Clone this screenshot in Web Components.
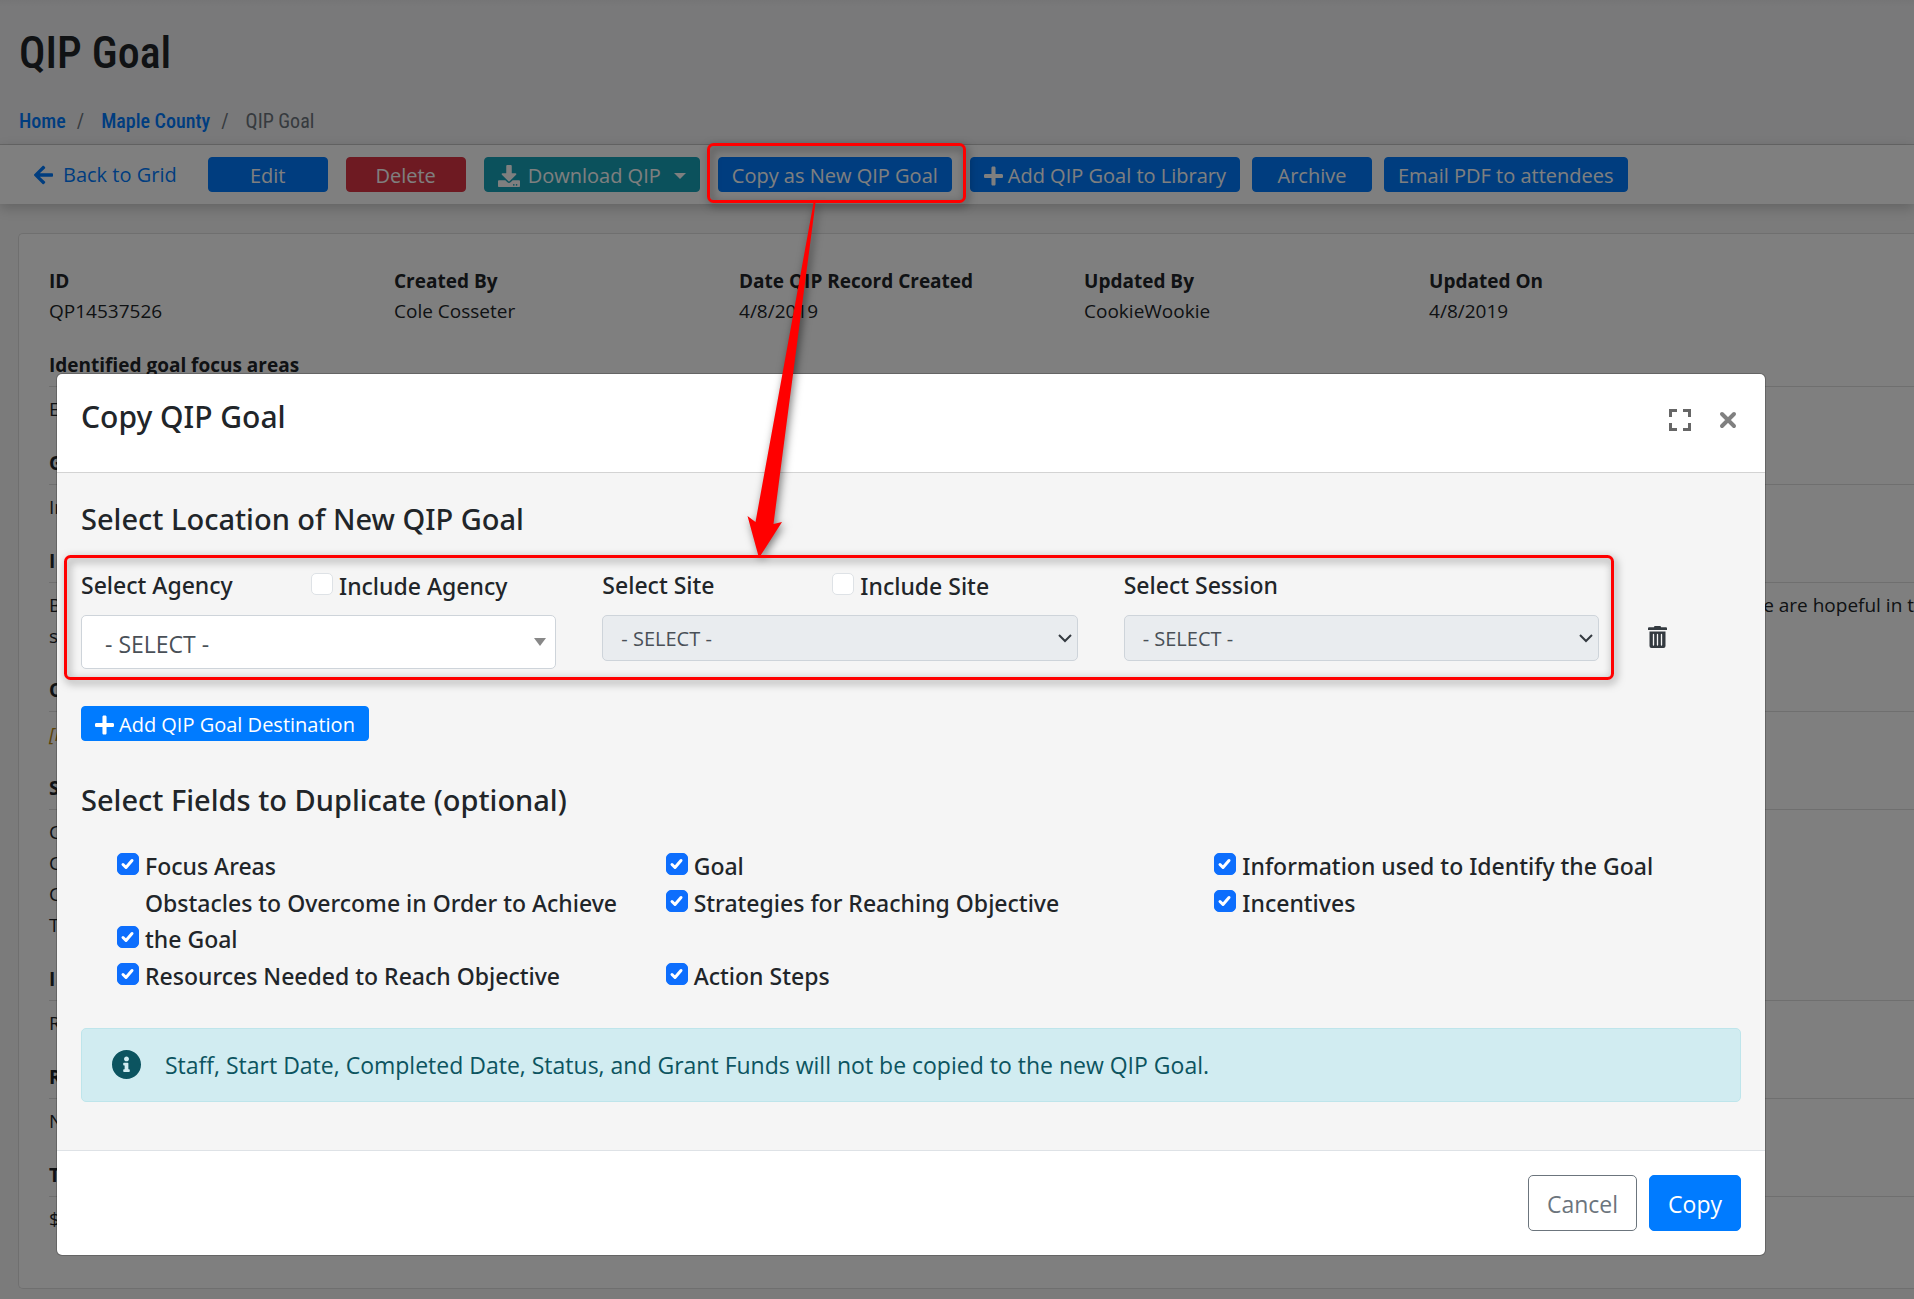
<!DOCTYPE html>
<html lang="en">
<head>
<meta charset="utf-8">
<title>QIP Goal</title>
<style>
  body {
    --medium-font: "Noto Sans", "Open Sans", sans-serif;
    margin: 0;
    height: 100vh;
    overflow: hidden;
    position: relative;
    background: #f6f6f6;
    color: #212529;
    font-family: "Open Sans", "Noto Sans", sans-serif;
    font-size: 19px;
    line-height: 30px;
  }
</style>
</head>
<body>

<page-header heading="QIP Goal">
  <a href="#home">Home</a>
  <a href="#county">Maple County</a>
  <span>QIP Goal</span>
</page-header>

<tool-bar>
  <back-link href="#grid">Back to Grid</back-link>
  <qip-button>Edit</qip-button>
  <qip-button variant="danger">Delete</qip-button>
  <qip-button variant="info" icon="download" caret>Download QIP</qip-button>
  <qip-button>Copy as New QIP Goal</qip-button>
  <tool-group slot="group">
    <qip-button icon="plus">Add QIP Goal to Library</qip-button>
    <qip-button>Archive</qip-button>
    <qip-button>Email PDF to attendees</qip-button>
  </tool-group>
</tool-bar>

<record-card>
  <record-field slot="meta" label="ID">QP14537526</record-field>
  <record-field slot="meta" label="Created By">Cole Cosseter</record-field>
  <record-field slot="meta" label="Date QIP Record Created">4/8/2019</record-field>
  <record-field slot="meta" label="Updated By">CookieWookie</record-field>
  <record-field slot="meta" label="Updated On">4/8/2019</record-field>

  <record-section label="Identified goal focus areas"><div>E</div></record-section>
  <record-section label="G"><div>In</div></record-section>
  <record-section label="I"><div>B</div><div slot="end">e are hopeful in t</div><div>s</div></record-section>
  <record-section label="O" empty><div>[N</div></record-section>
  <record-section label="S"><div>C</div><div>C</div><div>C</div><div>T</div></record-section>
  <record-section label="I"><div>R</div></record-section>
  <record-section label="R"><div>N</div></record-section>
  <record-section label="T"><div>$</div></record-section>
</record-card>

<modal-dialog heading="Copy QIP Goal">
  <section-title>Select Location of New QIP Goal</section-title>
  <location-row></location-row>
  <qip-button icon="plus">Add QIP Goal Destination</qip-button>
  <section-title class="fields">Select Fields to Duplicate (optional)</section-title>
  <check-grid>
    <check-box checked>Focus Areas</check-box>
    <check-box checked>Goal</check-box>
    <check-box checked>Information used to Identify the Goal</check-box>
    <check-box checked>Obstacles to Overcome in Order to Achieve the Goal</check-box>
    <check-box checked top>Strategies for Reaching Objective</check-box>
    <check-box checked top>Incentives</check-box>
    <check-box checked>Resources Needed to Reach Objective</check-box>
    <check-box checked>Action Steps</check-box>
  </check-grid>
  <info-alert>Staff, Start Date, Completed Date, Status, and Grant Funds will not be copied to the new QIP Goal.</info-alert>
  <qip-button slot="footer" variant="outline" size="lg">Cancel</qip-button>
  <qip-button slot="footer" size="lg">Copy</qip-button>
</modal-dialog>

<callout-layer></callout-layer>

<script>
const ICONS = {
  plus: '<svg viewBox="0 0 448 512" width="19" height="22"><path fill="currentColor" d="M416 208H272V64c0-17.67-14.33-32-32-32h-32c-17.67 0-32 14.33-32 32v144H32c-17.67 0-32 14.33-32 32v32c0 17.67 14.33 32 32 32h144v144c0 17.67 14.33 32 32 32h32c17.67 0 32-14.33 32-32V304h144c17.67 0 32-14.33 32-32v-32c0-17.67-14.33-32-32-32z"/></svg>',
  arrow: '<svg viewBox="0 0 448 512" width="19" height="22"><path fill="currentColor" d="M257.5 445.1l-22.2 22.2c-9.4 9.4-24.6 9.4-33.9 0L7 273c-9.4-9.4-9.4-24.6 0-33.9L201.4 44.7c9.4-9.4 24.6-9.4 33.9 0l22.2 22.2c9.5 9.5 9.3 25-.4 34.3L136.6 216H424c13.3 0 24 10.7 24 24v32c0 13.3-10.7 24-24 24H136.6l120.5 114.8c9.8 9.3 10 24.8.4 34.3z"/></svg>',
  download: '<svg viewBox="0 0 512 512" width="22" height="22"><path fill="currentColor" d="M216 0h80c13.3 0 24 10.7 24 24v168h87.7c17.8 0 26.7 21.5 14.1 34.1L269.7 378.3c-7.5 7.5-19.8 7.5-27.3 0L90.1 226.1c-12.6-12.6-3.7-34.1 14.1-34.1H192V24c0-13.3 10.7-24 24-24zm296 376v112c0 13.3-10.7 24-24 24H24c-13.3 0-24-10.7-24-24V376c0-13.3 10.7-24 24-24h146.7l49 49c20.1 20.1 52.5 20.1 72.6 0l49-49H488c13.3 0 24 10.7 24 24zm-124 88c0-11-9-20-20-20s-20 9-20 20 9 20 20 20 20-9 20-20zm64 0c0-11-9-20-20-20s-20 9-20 20 9 20 20 20 20-9 20-20z"/></svg>',
  info: '<svg viewBox="8 8 496 496" width="29" height="29"><path fill="currentColor" d="M256 8C119.043 8 8 119.083 8 256c0 136.997 111.043 248 248 248s248-111.003 248-248C504 119.083 392.957 8 256 8zm0 110c23.196 0 42 18.804 42 42s-18.804 42-42 42-42-18.804-42-42 18.804-42 42-42zm56 254c0 6.627-5.373 12-12 12h-88c-6.627 0-12-5.373-12-12v-24c0-6.627 5.373-12 12-12h12v-64h-12c-6.627 0-12-5.373-12-12v-24c0-6.627 5.373-12 12-12h64c6.627 0 12 5.373 12 12v100h12c6.627 0 12 5.373 12 12v24z"/></svg>',
  expand: '<svg viewBox="0 0 22 22" width="22" height="22"><path fill="none" stroke="currentColor" stroke-width="3" d="M1.5 8V1.500H8M14 1.500h6.500V8M20.500 14v6.500H14M8 20.500H1.500V14"/></svg>',
  close: '<svg viewBox="0 0 18 18" width="18" height="18"><path fill="none" stroke="currentColor" stroke-width="4" stroke-linecap="round" d="M3 3l12 12M15 3L3 15"/></svg>',
  trash: '<svg viewBox="0 0 19 22" width="19" height="22"><path fill="currentColor" d="M6 1.200Q6 0 7 0h5q1 0 1 1.200h5q1 0 1 1V4H0V2.200q0-1 1-1zM1.500 5.500h16V20q0 2-2 2h-12q-2 0-2-2z"/><path stroke="#f5f5f5" stroke-width="1.300" stroke-linecap="round" d="M5.500 8.500v10.500M9.500 8.500v10.500M13.500 8.500v10.500"/></svg>',
  check: '<svg viewBox="0 0 20 20" width="20" height="20"><path fill="none" stroke="#fff" stroke-width="3" stroke-linecap="round" stroke-linejoin="round" d="M5 10.500l3 3 6-7"/></svg>'
};

// Attaches an open shadow root and fills it
class BaseElement extends HTMLElement {
  constructor() {
    super();
    this.shadow = this.attachShadow({mode: 'open'});
  }

  connectedCallback() {
    this.shadow.innerHTML = this.render();
  }
}

class PageHeader extends BaseElement {
  render() {
    return `
<style>
  :host {
    display: block;
    padding: 24px 19px 8px;
    background: linear-gradient(#ebebed, #f2f2f4 6px);
    border-bottom: 1px solid #ccc;
    font-family: "Roboto Condensed", "Liberation Sans Narrow", Roboto, sans-serif;
  }
  h1 {
    margin: 0 0 24px;
    font-size: 44px;
    line-height: 58px;
    font-weight: 500;
  }
  nav {
    display: flex;
    font-size: 20px;
    line-height: 30px;
  }
  ::slotted(a) {
    color: #007bff;
    text-decoration: none;
    font-weight: 500;
  }
  ::slotted(a)::after {
    content: "/";
    padding: 0 17px 0 11px;
    color: #6c757d;
    font-weight: 400;
  }
  ::slotted(span) {
    color: #6c757d;
  }
</style>
<h1>${this.getAttribute('heading')}</h1>
<nav><slot></slot></nav>
`;
  }
}

class ToolBar extends BaseElement {
  render() {
    return `
<style>
  :host {
    display: flex;
    align-items: center;
    gap: 18px;
    padding: 12px 34px;
    background: #fff;
    box-shadow: 0 4px 12px rgba(0, 0, 0, .2);
  }
</style>
<slot></slot>
<slot name="group"></slot>
`;
  }
}

class ToolGroup extends BaseElement {
  render() {
    return `
<style>
  :host {
    display: flex;
    gap: 12px;
  }
</style>
<slot></slot>
`;
  }
}

class BackLink extends BaseElement {
  render() {
    return `
<style>
  :host {
    display: block;
    margin-right: 13px;
    font-size: 20px;
  }
  a {
    display: flex;
    align-items: center;
    gap: 10px;
    color: #007bff;
    text-decoration: none;
    white-space: nowrap;
  }
</style>
<a href="${this.getAttribute('href')}">${ICONS.arrow}<span><slot></slot></span></a>
`;
  }
}

class QipButton extends BaseElement {
  render() {
    const icon = this.getAttribute('icon');
    return `
<style>
  :host {
    display: inline-block;
  }
  button {
    display: flex;
    align-items: center;
    justify-content: center;
    gap: 5px;
    min-width: 120px;
    height: 35px;
    padding: 2px 13px 0;
    border: 1px solid #007bff;
    border-radius: 4px;
    background: #007bff;
    color: #fff;
    font: inherit;
    font-size: 20px;
    line-height: 30px;
    white-space: nowrap;
  }
  .caret {
    border: 6px solid transparent;
    border-top-color: currentColor;
    border-bottom: 0;
    margin-left: 5px;
  }
  :host([variant="danger"]) button {
    background: #dc3545;
    border-color: #dc3545;
  }
  :host([variant="info"]) button {
    gap: 8px;
    background: #17a2b8;
    border-color: #17a2b8;
  }
  :host([size="lg"]) button {
    min-width: 0;
    height: 56px;
    padding: 2px 18px 0;
    border-radius: 5px;
    font-size: 23px;
  }
  :host([variant="outline"]) button {
    background: #fff;
    border-color: #6c757d;
    color: #6c757d;
  }
</style>
<button type="button">${icon ? ICONS[icon] : ''}<span><slot></slot></span>${this.hasAttribute('caret') ? '<i class="caret"></i>' : ''}</button>
`;
  }
}

class RecordCard extends BaseElement {
  render() {
    return `
<style>
  :host {
    display: block;
    margin: 29px 0 0 18px;
    padding: 32px 0 30px 30px;
    background: #fff;
    border: 1px solid #dfdfdf;
    border-right: 0;
    border-radius: 5px 0 0 5px;
  }
  .meta {
    display: grid;
    grid-template-columns: repeat(5, 18.5%);
    margin-bottom: 24px;
  }
</style>
<div class="meta"><slot name="meta"></slot></div>
<slot></slot>
`;
  }
}

class RecordField extends BaseElement {
  render() {
    return `
<style>
  :host {
    display: block;
  }
  strong {
    display: block;
    font-weight: 700;
  }
</style>
<strong>${this.getAttribute('label')}</strong>
<slot></slot>
`;
  }
}

class RecordSection extends BaseElement {
  render() {
    return `
<style>
  :host {
    display: block;
    margin-bottom: 23px;
  }
  h2 {
    margin: 0 0 7px;
    padding-bottom: 6px;
    border-bottom: 1px solid #dfdfdf;
    font-size: 19px;
    line-height: 30px;
    font-weight: 700;
  }
  .text {
    display: flex;
    justify-content: space-between;
    line-height: 31px;
    white-space: nowrap;
  }
  :host([empty]) .text {
    color: #b8860b;
    font-style: italic;
  }
</style>
<h2>${this.getAttribute('label')}</h2>
<div class="text"><div><slot></slot></div><slot name="end"></slot></div>
`;
  }
}

class ModalDialog extends BaseElement {
  render() {
    return `
<style>
  :host {
    display: block;
    position: absolute;
    inset: 0;
    background: rgba(0, 0, 0, .5);
  }
  .dialog {
    margin: 373px 148px 0 56px;
    border: 1px solid rgba(0, 0, 0, .2);
    border-radius: 6px;
    background: #fff;
    background-clip: padding-box;
    overflow: hidden;
  }
  header {
    display: flex;
    justify-content: space-between;
    padding: 26px 28px 38px 24px;
    border-bottom: 1px solid #d3d3d3;
  }
  h3 {
    margin: 0;
    font-family: var(--medium-font);
    font-size: 30px;
    line-height: 34px;
    font-weight: 500;
  }
  .tools {
    display: flex;
    align-items: center;
    gap: 28px;
    height: 40px;
    margin-bottom: -6px;
  }
  header button {
    display: flex;
    padding: 0;
    border: 0;
    background: none;
    color: #666;
  }
  header button + button {
    color: #808080;
  }
  .body {
    padding: 29px 24px 48px;
    background: #f5f5f5;
  }
  footer {
    display: flex;
    justify-content: flex-end;
    gap: 12px;
    padding: 24px;
    border-top: 1px solid #dee2e6;
  }
  ::slotted(section-title.fields) {
    margin-top: 39px;
    margin-bottom: 31px;
  }
</style>
<div class="dialog" role="dialog" aria-labelledby="title">
  <header>
    <h3 id="title">${this.getAttribute('heading')}</h3>
    <div class="tools">
      <button type="button" aria-label="Full screen">${ICONS.expand}</button>
      <button type="button" aria-label="Close">${ICONS.close}</button>
    </div>
  </header>
  <div class="body"><slot></slot></div>
  <footer><slot name="footer"></slot></footer>
</div>
`;
  }
}

class SectionTitle extends BaseElement {
  render() {
    return `
<style>
  :host {
    display: block;
    margin-bottom: 32px;
  }
  h4 {
    margin: 0;
    font-family: var(--medium-font);
    font-size: 29px;
    line-height: 34px;
    font-weight: 500;
  }
</style>
<h4><slot></slot></h4>
`;
  }
}

class CheckBox extends BaseElement {
  render() {
    const checked = this.hasAttribute('checked');
    return `
<style>
  :host {
    display: flex;
    align-items: flex-end;
    font-family: var(--medium-font);
    font-size: 23px;
    line-height: 36px;
    font-weight: 500;
  }
  :host([top]) {
    align-items: flex-start;
  }
  label {
    display: flex;
    align-items: flex-end;
    gap: 6px;
  }
  .box {
    display: grid;
    margin-bottom: 9px;
  }
  input, svg {
    grid-area: 1 / 1;
    place-self: center;
  }
  svg {
    pointer-events: none;
  }
  input {
    appearance: none;
    width: 22px;
    height: 22px;
    margin: 0;
    border: 1px solid #dee2e6;
    border-radius: 5px;
    background: #fff;
  }
  input:checked {
    border-color: #0d6efd;
    background: #0d6efd;
  }
</style>
<label><span class="box"><input type="checkbox"${checked ? ' checked' : ''}>${checked ? ICONS.check : ''}</span><span><slot></slot></span></label>
`;
  }
}

class LocationRow extends BaseElement {
  render() {
    return `
<style>
  :host {
    display: grid;
    grid-template-columns: repeat(3, 1fr) 96px;
    column-gap: 46px;
    margin-bottom: 37px;
    font-size: 23px;
  }
  .head {
    display: grid;
    grid-template-columns: 230px 1fr;
    height: 34px;
    margin-bottom: 13px;
    font-family: var(--medium-font);
    line-height: 34px;
    font-weight: 500;
  }
  check-box {
    height: 36px;
  }
  .control {
    display: grid;
    align-items: center;
  }
  select, .control svg {
    grid-area: 1 / 1;
  }
  .control svg {
    justify-self: end;
    margin-right: 6px;
    pointer-events: none;
  }
  .control .large + svg {
    margin-right: 10px;
  }
  select {
    appearance: none;
    width: 100%;
    height: 46px;
    padding: 2px 18px 0;
    border: 1px solid #ced4da;
    border-radius: 5px;
    background: #e9ecef;
    color: #495057;
    opacity: 1;
    font: inherit;
    font-size: 20px;
  }
  select.large {
    height: 54px;
    padding: 3px 23px 0;
    background: #fff;
    font-size: 23px;
  }
  .remove {
    justify-self: start;
    align-self: start;
    margin: 58px 0 0 3px;
    padding: 0;
    border: 0;
    background: none;
    color: #343a40;
    display: flex;
  }
</style>
<div>
  <div class="head"><label for="agency">Select Agency</label><check-box>Include Agency</check-box></div>
  <div class="control">
    <select id="agency" class="large"><option>- SELECT -</option></select>
    <svg viewBox="0 0 12 8" width="12" height="8"><path fill="#888" d="M0 0h12L6 8z"/></svg>
  </div>
</div>
<div>
  <div class="head"><label for="site">Select Site</label><check-box>Include Site</check-box></div>
  <div class="control">
    <select id="site" disabled><option>- SELECT -</option></select>
    <svg viewBox="0 0 14 9" width="14" height="9"><path fill="none" stroke="#343a40" stroke-width="2" d="M1 1l6 6 6-6"/></svg>
  </div>
</div>
<div>
  <div class="head"><label for="session">Select Session</label></div>
  <div class="control">
    <select id="session" disabled><option>- SELECT -</option></select>
    <svg viewBox="0 0 14 9" width="14" height="9"><path fill="none" stroke="#343a40" stroke-width="2" d="M1 1l6 6 6-6"/></svg>
  </div>
</div>
<button class="remove" type="button" aria-label="Remove destination">${ICONS.trash}</button>
`;
  }
}

class CheckGrid extends BaseElement {
  render() {
    return `
<style>
  :host {
    display: grid;
    grid-template-columns: repeat(3, 1fr);
    row-gap: 1px;
    margin: 0 -22px 34px 36px;
  }
  ::slotted(check-box) {
    padding-right: 40px;
  }
</style>
<slot></slot>
`;
  }
}

class InfoAlert extends BaseElement {
  render() {
    return `
<style>
  :host {
    display: flex;
    align-items: center;
    gap: 24px;
    padding: 18px 30px;
    border: 1px solid #bee5eb;
    border-radius: 5px;
    background: #d1ecf1;
    color: #0c5460;
    font-size: 23px;
    line-height: 36px;
  }
  svg {
    flex: none;
  }
</style>
${ICONS.info}<span><slot></slot></span>
`;
  }
}

// Red outlines and the arrow drawn on top of everything else
class CalloutLayer extends BaseElement {
  render() {
    return `
<style>
  :host {
    display: block;
    position: absolute;
    inset: 0;
    pointer-events: none;
  }
  svg {
    width: 100%;
    height: 100%;
    filter: drop-shadow(2px 3px 4px rgba(0, 0, 0, .5));
  }
  rect {
    fill: none;
    stroke: #f00;
    stroke-width: 3;
  }
</style>
<svg aria-hidden="true">
  <rect x="708.500" y="144.500" width="256" height="57" rx="5"/>
  <rect x="65.500" y="556.500" width="1547" height="122" rx="5"/>
  <path fill="#f00" d="M813.500 203L755.500 522 747.500 516 759 558 782 522 773.500 524 787 420 815.500 203z"/>
</svg>
`;
  }
}

customElements.define('page-header', PageHeader);
customElements.define('tool-bar', ToolBar);
customElements.define('tool-group', ToolGroup);
customElements.define('back-link', BackLink);
customElements.define('qip-button', QipButton);
customElements.define('record-card', RecordCard);
customElements.define('record-field', RecordField);
customElements.define('record-section', RecordSection);
customElements.define('modal-dialog', ModalDialog);
customElements.define('section-title', SectionTitle);
customElements.define('check-box', CheckBox);
customElements.define('location-row', LocationRow);
customElements.define('check-grid', CheckGrid);
customElements.define('info-alert', InfoAlert);
customElements.define('callout-layer', CalloutLayer);
</script>
</body>
</html>
